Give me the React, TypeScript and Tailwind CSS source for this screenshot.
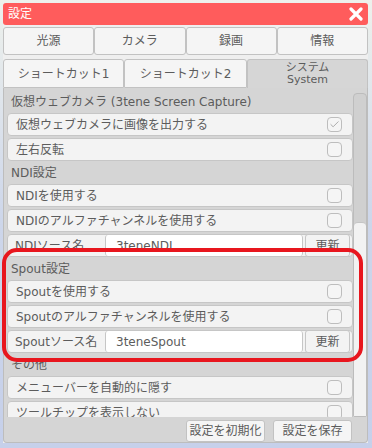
import { Check } from 'lucide-react';

const font = { fontFamily: '"DejaVu Sans", "Noto Sans CJK JP", sans-serif' };

function Header({ label }: { label: string }) {
  return (
    <div className="h-[19px] shrink-0 flex items-center pl-[4px] text-[12px] text-[#5c5c5c] leading-none">
      {label}
    </div>
  );
}

function Toggle({ label, checked }: { label: string; checked?: boolean }) {
  return (
    <div className="h-[23px] shrink-0 flex items-center justify-between pl-[8px] pr-[10px] bg-[#f3f3f3] border border-[#c6c6c6] rounded-[4px] text-[12px] text-[#5c5c5c] leading-none">
      <span>{label}</span>
      <span className="w-[15px] h-[15px] rounded-[4px] border border-[#bdbdbd] bg-[#f5f5f5] flex items-center justify-center">
        {checked && <Check size={11} strokeWidth={1.5} className="text-[#8a8a8a]" />}
      </span>
    </div>
  );
}

function SourceRow({ label, value }: { label: string; value: string }) {
  return (
    <div className="h-[23px] shrink-0 flex items-stretch bg-[#f3f3f3] border border-[#c6c6c6] rounded-[4px] text-[12px] text-[#5c5c5c] leading-none">
      <span className="w-[97px] pl-[7px] flex items-center whitespace-nowrap">{label}</span>
      <span className="w-[198px] bg-white border-l border-r border-[#c6c6c6] rounded-[3px] flex items-center pl-[10px]">
        {value}
      </span>
      <span className="ml-[2px] w-[45px] border border-[#c6c6c6] rounded-[3px] flex items-center justify-center bg-[#f3f3f3] -my-px">
        更新
      </span>
    </div>
  );
}

export default function App() {
  return (
    <div
      className="relative w-[372px] h-[448px] overflow-hidden bg-gradient-to-b from-[#eef1ec] via-[#cdd6ea] to-[#c6d0ea] pt-[3px] pl-[3px] pr-[4px]"
      style={font}
    >
      <div className="w-[365px] h-[440px] flex flex-col bg-[#efefef]">
        {/* Title bar */}
        <div className="h-[22px] shrink-0 bg-[#ff5c5c] rounded-[3px] flex items-center justify-between pl-[5px] pr-[4px] text-white text-[12px]">
          <span>設定</span>
          <svg width="14" height="14" viewBox="0 0 14 14" className="mr-[1px]">
            <path d="M2 2 L12 12 M12 2 L2 12" stroke="white" strokeWidth="3.2" strokeLinecap="round" />
          </svg>
        </div>

        {/* Tabs row 1 */}
        <div className="mt-[2px] h-[28px] shrink-0 grid grid-cols-4 text-[12px] text-[#5c5c5c]">
          {['光源', 'カメラ', '録画', '情報'].map((t) => (
            <div key={t} className="bg-[#f5f5f5] border border-[#c2c2c2] rounded-[3px] flex items-center justify-center">
              {t}
            </div>
          ))}
        </div>

        {/* Tabs row 2 */}
        <div className="mt-[4px] h-[29px] shrink-0 grid grid-cols-[121px_123px_121px] text-[12px] text-[#5c5c5c]">
          <div className="bg-[#f5f5f5] border border-[#c2c2c2] rounded-t-[3px] flex items-center justify-center">ショートカット1</div>
          <div className="bg-[#f5f5f5] border border-[#c2c2c2] rounded-t-[3px] flex items-center justify-center">ショートカット2</div>
          <div className="bg-[#d6d6d6] border border-b-0 border-[#c2c2c2] rounded-t-[3px] flex flex-col items-center justify-center">
            <span className="text-[11px] leading-[12px]">システム</span>
            <span className="text-[11px] leading-[12px]">System</span>
          </div>
        </div>

        {/* Panel */}
        <div className="flex-1 flex flex-col bg-[#d5d5d5] border border-t-0 border-[#bdbdbd] rounded-b-[4px]">
          <div className="h-[329px] shrink-0 flex">
            <div className="flex-1 overflow-hidden pt-[4px] pl-[3px] flex flex-col gap-[2px]">
              <Header label="仮想ウェブカメラ (3tene Screen Capture)" />
              <Toggle label="仮想ウェブカメラに画像を出力する" checked />
              <Toggle label="左右反転" />
              <Header label="NDI設定" />
              <Toggle label="NDIを使用する" />
              <Toggle label="NDIのアルファチャンネルを使用する" />
              <SourceRow label="NDIソース名" value="3teneNDI" />
              <Header label="Spout設定" />
              <Toggle label="Spoutを使用する" />
              <Toggle label="Spoutのアルファチャンネルを使用する" />
              <SourceRow label="Spoutソース名" value="3teneSpout" />
              <Header label="その他" />
              <Toggle label="メニューバーを自動的に隠す" />
              <Toggle label="ツールチップを表示しない" />
            </div>
            {/* Scrollbar */}
            <div className="w-[14px] shrink-0 mt-[5px] flex flex-col bg-[#d0d0d0] border border-[#bcbcbc] rounded-t-[4px] rounded-b-[2px]">
              <div className="h-[128px] shrink-0" />
              <div className="flex-1 bg-[#f2f2f2] border-t border-[#c4c4c4] rounded-t-[4px]" />
            </div>
          </div>

          {/* Footer */}
          <div className="flex justify-end gap-[8px] pt-[3px] pr-[15px] text-[12px] text-[#5c5c5c]">
            <div className="w-[79px] h-[22px] bg-[#f5f5f5] border border-[#c2c2c2] rounded-[3px] flex items-center justify-center whitespace-nowrap">設定を初期化</div>
            <div className="w-[79px] h-[22px] bg-[#f5f5f5] border border-[#c2c2c2] rounded-[3px] flex items-center justify-center whitespace-nowrap">設定を保存</div>
          </div>
        </div>
      </div>

      {/* Red highlight annotation */}
      <div className="absolute left-[2px] top-[248px] w-[361px] h-[114px] border-[4px] border-[#e8161e] rounded-[15px] pointer-events-none" />
    </div>
  );
}
